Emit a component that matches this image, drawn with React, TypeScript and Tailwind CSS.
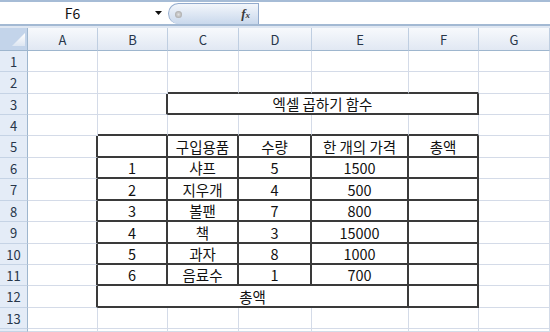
import React from "react";

type CellSpec = { text?: string; span?: number };

const COL_NAMES = ["A", "B", "C", "D", "E", "F", "G"];
const ROW_COUNT = 14;

const DATA: Record<number, Record<number, CellSpec>> = {
  3: { 2: { text: "엑셀 곱하기 함수", span: 4 } },
  5: { 2: { text: "구입용품" }, 3: { text: "수량" }, 4: { text: "한 개의 가격" }, 5: { text: "총액" } },
  6: { 1: { text: "1" }, 2: { text: "샤프" }, 3: { text: "5" }, 4: { text: "1500" } },
  7: { 1: { text: "2" }, 2: { text: "지우개" }, 3: { text: "4" }, 4: { text: "500" } },
  8: { 1: { text: "3" }, 2: { text: "볼팬" }, 3: { text: "7" }, 4: { text: "800" } },
  9: { 1: { text: "4" }, 2: { text: "책" }, 3: { text: "3" }, 4: { text: "15000" } },
  10: { 1: { text: "5" }, 2: { text: "과자" }, 3: { text: "8" }, 4: { text: "1000" } },
  11: { 1: { text: "6" }, 2: { text: "음료수" }, 3: { text: "1" }, 4: { text: "700" } },
  12: { 1: { text: "총액", span: 4 } },
};

function inTable(c: number, r: number) {
  return (c >= 1 && c <= 5 && r >= 5 && r <= 12) || (c >= 2 && c <= 5 && r === 3);
}

function Cell({ c, r, spec }: { c: number; r: number; spec?: CellSpec }) {
  const span = spec?.span ?? 1;
  const end = c + span - 1;
  const darkR = inTable(end, r) || inTable(end + 1, r);
  const darkB = inTable(c, r) || inTable(c, r + 1);
  return (
    <div
      className={[
        "flex min-h-0 items-center justify-center whitespace-nowrap bg-white text-[14.5px] leading-[19px] text-[#111]",
        span === 4 ? "col-span-4" : "",
        darkR ? "border-r-2 border-r-[#3a3a3a]" : "border-r border-r-[#d4dbe8]",
        darkB ? "border-b-2 border-b-[#3a3a3a]" : "border-b border-b-[#d4dbe8]",
      ].join(" ")}
    >
      {spec?.text ? <span>{spec.text}</span> : null}
    </div>
  );
}

function FormulaBar() {
  return (
    <div className="flex h-[24px] border-t-2 border-t-[#a6bcd6] bg-white">
      <div className="flex w-[168px] items-center">
        <span className="w-[145px] text-center text-[14px] leading-[18px] text-[#111]">F6</span>
        <span className="flex w-[23px] items-center pl-[10px]">
          <svg width="7" height="4" viewBox="0 0 7 4">
            <path d="M0 0 H7 L3.5 4 Z" fill="#111" />
          </svg>
        </span>
      </div>
      <div className="mt-[1px] flex h-[21px] w-[91px] items-center justify-between rounded-l-[11px] border border-b-0 border-[#93abcd] bg-linear-to-b from-[#f3f6fb] to-[#c9d8ec]">
        <span className="ml-[6px] h-[7px] w-[7px] rounded-full bg-radial from-[#e0e0e0] to-[#9a9a9a]" />
        <span className="mr-[8px] font-['Liberation_Serif',serif] text-[13px] font-bold italic leading-[16px] text-[#3a3a3a]">
          f<span className="text-[9px]">x</span>
        </span>
      </div>
      <div className="flex-1 bg-white" />
    </div>
  );
}

export default function App() {
  const rows: React.ReactNode[] = [];
  for (let r = 1; r <= ROW_COUNT; r++) {
    rows.push(
      <div
        key={`h${r}`}
        className="flex items-center justify-center overflow-hidden border-r border-b border-r-[#9eb6ce] border-b-[#c5d3e5] bg-[#e4ecf7] text-[13px] leading-[17px] text-[#27364a]"
      >
        {r < 14 ? r : ""}
      </div>
    );
    const rowData = DATA[r] ?? {};
    for (let c = 0; c < 7; c++) {
      const spec = rowData[c];
      rows.push(<Cell key={`${r}-${c}`} c={c} r={r} spec={spec} />);
      if (spec?.span) c += spec.span - 1;
    }
  }

  return (
    <div className="h-[332px] w-[550px] overflow-hidden bg-white font-['Noto_Sans_CJK_KR','Noto_Sans',sans-serif]">
      <FormulaBar />
      <div className="h-[2px] bg-[#a3b9d3]" />
      <div className="h-[2px] bg-[#dfe7f2]" />
      <div className="grid grid-cols-[28px_70px_70px_71px_73px_97px_70px_71px] grid-rows-[23px_21px_22px_21px_21px_22px_21px_22px_21px_22px_21px_21px_22px_21px_3px]">
        <div className="flex items-end justify-end border-r border-b border-[#9eb6ce] bg-[#c3d4ea] pr-[2px] pb-[4px]">
          <svg width="13" height="13" viewBox="0 0 13 13">
            <defs>
              <linearGradient id="tri" x1="0" y1="0" x2="0" y2="1">
                <stop offset="0" stopColor="#ffffff" />
                <stop offset="1" stopColor="#dde6f2" />
              </linearGradient>
            </defs>
            <path d="M13 0 V13 H0 Z" fill="url(#tri)" />
          </svg>
        </div>
        {COL_NAMES.map((n) => (
          <div
            key={n}
            className="flex items-center justify-center border-r border-b border-r-[#bfcee1] border-b-[#9eb6ce] bg-linear-to-b from-[#f7f9fc] to-[#e1e8f3] text-[13px] leading-[17px] text-[#27364a]"
          >
            {n}
          </div>
        ))}
        {rows}
      </div>
    </div>
  );
}
